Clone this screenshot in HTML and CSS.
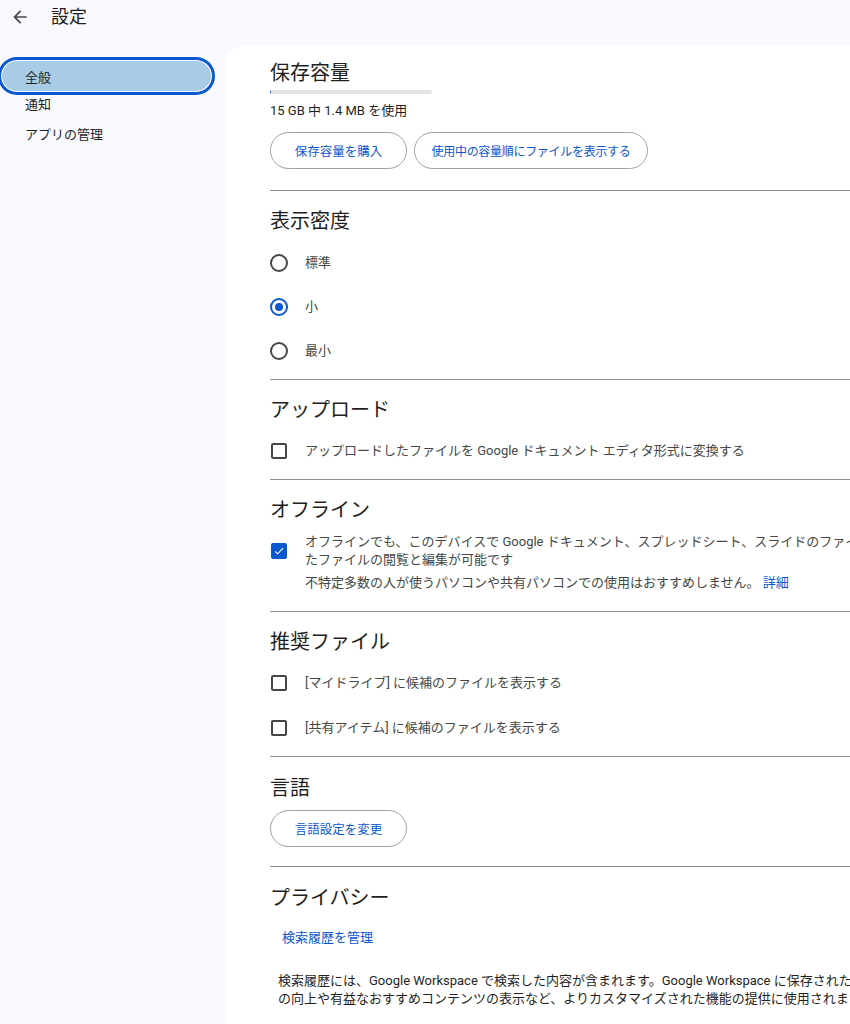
FILE: index.html
```html
<!DOCTYPE html>
<html lang="ja">
<head>
<meta charset="utf-8">
<title>設定</title>
<link rel="stylesheet" href="styles.css">
</head>
<body>
<header class="topbar">
  <span class="back">
    <svg width="20" height="20" viewBox="0 0 24 24"><path d="M20 11H7.83l5.59-5.59L12 4l-8 8 8 8 1.41-1.41L7.83 13H20v-2z" fill="#444746"/></svg>
  </span>
  <h1 class="title">設定</h1>
</header>
<div class="layout">
  <nav class="sidebar">
    <a class="nav-item active">全般</a>
    <a class="nav-item">通知</a>
    <a class="nav-item">アプリの管理</a>
  </nav>
  <main class="card">
    <div class="content">
      <section class="section storage">
        <h2 class="heading">保存容量</h2>
        <div class="bar"><div class="bar-fill" style="width:0.5%"></div></div>
        <p class="usage">15 GB 中 1.4 MB を使用</p>
        <div class="buttons">
          <button class="btn btn-short">保存容量を購入</button>
          <button class="btn btn-long">使用中の容量順にファイルを表示する</button>
        </div>
      </section>
      <section class="section">
        <h2 class="heading">表示密度</h2>
        <div class="options">
          <label class="option"><span class="radio"></span><span class="label">標準</span></label>
          <label class="option"><span class="radio checked"></span><span class="label">小</span></label>
          <label class="option"><span class="radio"></span><span class="label">最小</span></label>
        </div>
      </section>
      <section class="section">
        <h2 class="heading">アップロード</h2>
        <div class="options upload">
          <label class="option"><span class="check"></span><span class="label">アップロードしたファイルを Google ドキュメント エディタ形式に変換する</span></label>
        </div>
      </section>
      <section class="section">
        <h2 class="heading">オフライン</h2>
        <div class="offline">
          <span class="check checked">
            <svg width="14" height="14" viewBox="0 0 24 24"><path d="M9 16.17L4.83 12l-1.42 1.41L9 19 21 7l-1.41-1.41z" fill="#fff"/></svg>
          </span>
          <div class="offline-text">
            <p class="label">オフラインでも、このデバイスで Google ドキュメント、スプレッドシート、スライドのファイルを作成、最近使用したファイルの閲覧と編集が可能です</p>
            <p class="label note">不特定多数の人が使うパソコンや共有パソコンでの使用はおすすめしません。 <a class="link">詳細</a></p>
          </div>
        </div>
      </section>
      <section class="section">
        <h2 class="heading">推奨ファイル</h2>
        <div class="options suggested">
          <label class="option"><span class="check"></span><span class="label">[マイドライブ] に候補のファイルを表示する</span></label>
          <label class="option"><span class="check"></span><span class="label">[共有アイテム] に候補のファイルを表示する</span></label>
        </div>
      </section>
      <section class="section shifted">
        <h2 class="heading">言語</h2>
        <div class="buttons lang">
          <button class="btn btn-short">言語設定を変更</button>
        </div>
      </section>
      <section class="section last shifted">
        <h2 class="heading">プライバシー</h2>
        <a class="text-btn">検索履歴を管理</a>
        <p class="privacy">検索履歴には、Google Workspace で検索した内容が含まれます。Google Workspace に保存された検索履歴は、検索品質の向上や有益なおすすめコンテンツの表示など、よりカスタマイズされた機能の提供に使用されます。</p>
      </section>
    </div>
  </main>
</div>
</body>
</html>
```

FILE: styles.css
```css
* { box-sizing: border-box; }
html, body {
  margin: 0;
  padding: 0;
  background: #f8f9fd;
  font-family: Roboto, "Noto Sans CJK JP", sans-serif;
  color: #1f1f1f;
  overflow: hidden;
  width: 850px;
  height: 1024px;
}
p { margin: 0; }
.topbar {
  display: flex;
  align-items: center;
  height: 34px;
  padding-left: 10px;
}
.back {
  display: flex;
  width: 20px;
  height: 20px;
}
.title {
  margin: 0 0 0 21px;
  font-size: 18px;
  font-weight: 400;
  color: #1f1f1f;
  line-height: 24px;
}
.layout {
  display: flex;
  margin-top: 12px;
}
.sidebar {
  width: 226px;
  flex: none;
  padding-top: 13px;
  display: flex;
  flex-direction: column;
}
.nav-item {
  display: flex;
  align-items: center;
  height: 30px;
  padding-left: 25px;
  font-size: 13px;
  color: #1f1f1f;
  width: 213px;
}
.nav-item.active {
  height: 34px;
  padding-left: 24px;
  background: #a8cce6;
  border-radius: 17px;
  box-shadow: inset 0 0 0 1px #fff, 0 0 0 2px #0b57d0;
  border: 1px solid #0b57d0;
  margin-bottom: -5px;
}
.card {
  flex: 1;
  background: #fff;
  border-top-left-radius: 16px;
  min-height: 1000px;
  overflow: hidden;
}
.content {
  width: 760px;
  margin-left: 44px;
  padding-top: 12px;
}
.section {
  border-bottom: 1px solid #8e918f;
  padding-bottom: 6px;
  margin-bottom: 15px;
}
.section.shifted { padding-top: 1px; }
.section.last { border-bottom: none; }
.heading {
  margin: 0;
  font-size: 20px;
  font-weight: 400;
  line-height: 30px;
  color: #1f1f1f;
}
.bar {
  width: 162px;
  height: 4px;
  border-radius: 2px;
  background: #e3e3e3;
  margin-top: 2px;
  overflow: hidden;
}
.bar-fill { height: 100%; background: #0b57d0; }
.usage {
  font-size: 13px;
  line-height: 16px;
  margin-top: 9px;
  color: #1f1f1f;
}
.buttons {
  display: flex;
  gap: 7px;
  margin-top: 13px;
  padding-bottom: 15px;
}
.buttons.lang {
  margin-top: 7px;
  padding-bottom: 13px;
}
.btn {
  height: 37px;
  border: 1px solid #a0a3a2;
  background: #fff;
  border-radius: 19px;
  padding: 0;
  font-family: Roboto, "Noto Sans CJK JP", sans-serif;
  font-size: 12.5px;
  color: #0b57d0;
  text-align: center;
}
.btn-short { width: 137px; }
.btn-long { width: 234px; font-size: 12px; letter-spacing: -0.3px; }
.options {
  display: flex;
  flex-direction: column;
  padding-top: 5px;
}
.options.upload { padding-top: 4px; }
.options.suggested { padding-top: 3px; }
.option {
  display: flex;
  align-items: center;
  height: 44px;
}
.suggested .option { height: 45px; }
.radio {
  width: 18px;
  height: 18px;
  border-radius: 50%;
  border: 2px solid #444746;
  flex: none;
  margin-right: 17px;
  position: relative;
}
.radio.checked { border-color: #0b57d0; }
.radio.checked::after {
  content: "";
  position: absolute;
  inset: 3px;
  border-radius: 50%;
  background: #0b57d0;
}
.check {
  width: 16px;
  height: 16px;
  border: 2px solid #444746;
  border-radius: 2px;
  flex: none;
  margin-left: 1px;
  margin-right: 18px;
  display: flex;
  align-items: center;
  justify-content: center;
}
.check.checked {
  background: #0b57d0;
  border-color: #0b57d0;
}
.label {
  font-size: 13px;
  color: #444746;
  line-height: 18px;
}
.offline {
  display: flex;
  align-items: flex-start;
  padding-top: 8px;
  padding-bottom: 13px;
}
.offline .check { margin-top: 10px; }
.offline-text { width: 690px; flex: none; }
.note { margin-top: 5px; }
.link { color: #0b57d0; }
.text-btn {
  display: block;
  margin-top: 16px;
  padding-left: 12px;
  font-size: 13px;
  color: #0b57d0;
  line-height: 18px;
}
.privacy {
  margin-top: 25px;
  padding-left: 8px;
  width: 720px;
  font-size: 13px;
  line-height: 18px;
  color: #1f1f1f;
}
```
